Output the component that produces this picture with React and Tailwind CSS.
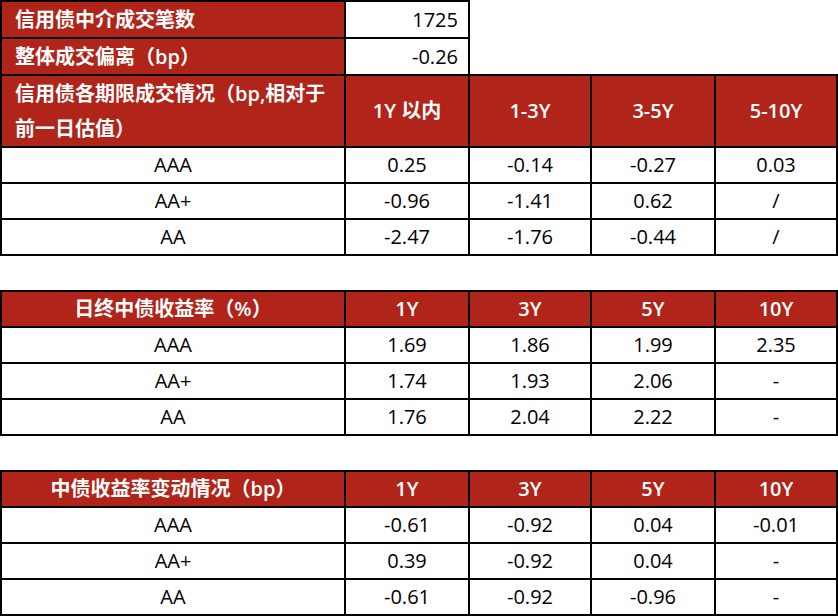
const cols = "grid-cols-[342px_122px_120px_122px_120px]";

function Cell({ children }) {
  return <div className="flex h-[34px] items-center justify-center bg-white text-black">{children}</div>;
}

function DataTable({ title, heads, rows, tall, titleLeft }) {
  return (
    <div className={"grid gap-[2px] bg-black p-[2px] " + cols}>
      <div
        className={
          "flex bg-[#b0241a] font-semibold text-white " +
          (titleLeft ? "items-center justify-start pl-[13px] leading-[35px]" : "h-[34px] items-center justify-center")
        }
      >
        {title}
      </div>
      {heads.map((h) => (
        <div key={h} className={"flex items-center justify-center bg-[#b0241a] font-semibold text-white " + (tall ? "h-[70px]" : "h-[34px]")}>
          {h}
        </div>
      ))}
      {rows.map((r) =>
        r.map((v, i) => <Cell key={r[0] + i}>{v}</Cell>)
      )}
    </div>
  );
}

export default function App() {
  return (
    <div
      className="w-[838px] bg-white text-[20px]"
      style={{ fontFamily: '"Open Sans", "Noto Sans CJK SC", sans-serif' }}
    >
      {/* summary rows */}
      <div className="grid w-[470px] grid-cols-[342px_122px] gap-[2px] bg-black px-[2px] pt-[2px]">
        <div className="flex h-[35px] items-center bg-[#b0241a] pl-[13px] font-semibold text-white">信用债中介成交笔数</div>
        <div className="flex h-[35px] items-center justify-end bg-white pr-[10px]">1725</div>
        <div className="flex h-[35px] items-center bg-[#b0241a] pl-[13px] font-semibold text-white">整体成交偏离（bp）</div>
        <div className="flex h-[35px] items-center justify-end bg-white pr-[10px]">-0.26</div>
      </div>

      <DataTable
        titleLeft
        tall
        title={
          <span className="whitespace-nowrap">
            信用债各期限成交情况（bp,相对于
            <br />
            前一日估值）
          </span>
        }
        heads={["1Y 以内", "1-3Y", "3-5Y", "5-10Y"]}
        rows={[
          ["AAA", "0.25", "-0.14", "-0.27", "0.03"],
          ["AA+", "-0.96", "-1.41", "0.62", "/"],
          ["AA", "-2.47", "-1.76", "-0.44", "/"],
        ]}
      />

      <div className="h-[34px]" />

      <DataTable
        title="日终中债收益率（%）"
        heads={["1Y", "3Y", "5Y", "10Y"]}
        rows={[
          ["AAA", "1.69", "1.86", "1.99", "2.35"],
          ["AA+", "1.74", "1.93", "2.06", "-"],
          ["AA", "1.76", "2.04", "2.22", "-"],
        ]}
      />

      <div className="h-[34px]" />

      <DataTable
        title="中债收益率变动情况（bp）"
        heads={["1Y", "3Y", "5Y", "10Y"]}
        rows={[
          ["AAA", "-0.61", "-0.92", "0.04", "-0.01"],
          ["AA+", "0.39", "-0.92", "0.04", "-"],
          ["AA", "-0.61", "-0.92", "-0.96", "-"],
        ]}
      />
    </div>
  );
}
